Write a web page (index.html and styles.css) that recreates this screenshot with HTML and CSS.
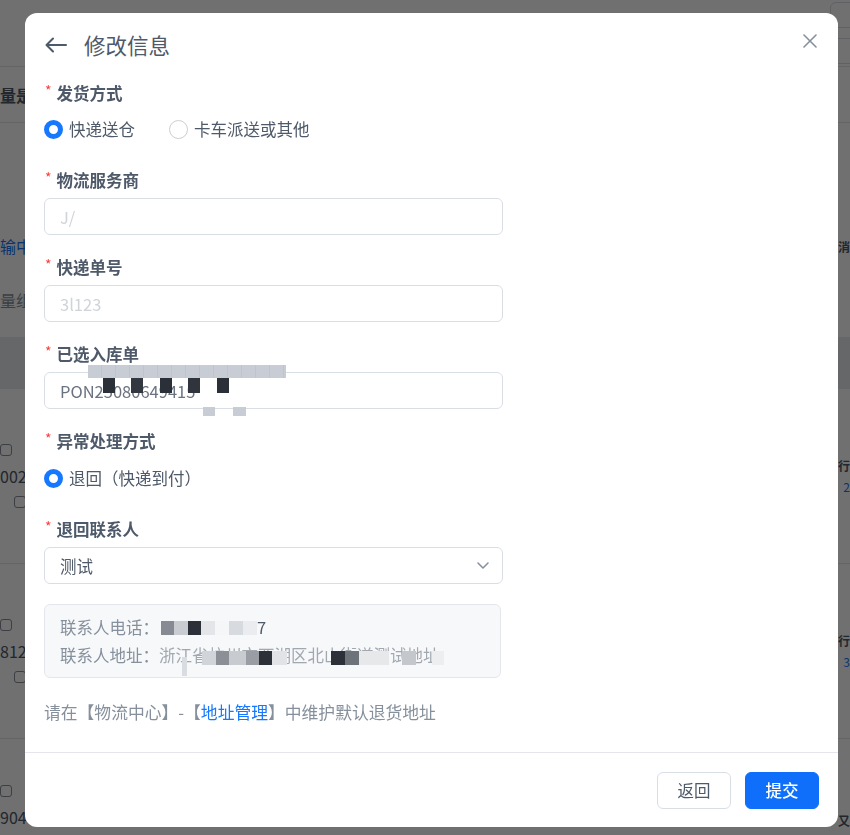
FILE: index.html
```html
<!DOCTYPE html>
<html lang="zh-CN">
<head>
<meta charset="utf-8">
<title>修改信息</title>
<link rel="stylesheet" href="styles.css">
</head>
<body>
<div class="page">
  <div class="bg-row row-top">
    <span></span>
    <div class="bg-btns"><span class="bg-btn"></span><span class="bg-btn"></span></div>
  </div>
  <div class="bg-row row-filter"><span class="bg-text">量是</span><span></span></div>
  <div class="bg-row row-gap"><span></span><span></span></div>
  <div class="bg-row row-tabs"><span class="bg-link">输中</span><span class="bg-text edge">消</span></div>
  <div class="bg-row row-batch"><span class="bg-text light">量组</span><span></span></div>
  <div class="bg-head"></div>
  <div class="bg-item">
    <div class="bg-left"><span class="bg-copy"></span><span class="bg-num">002</span><span class="bg-copy shift"></span></div>
    <div class="bg-right"><span class="bg-text">行</span><span class="bg-link">2</span></div>
  </div>
  <div class="bg-item">
    <div class="bg-left"><span class="bg-copy"></span><span class="bg-num">812</span><span class="bg-copy shift"></span></div>
    <div class="bg-right"><span class="bg-text">行</span><span class="bg-link">3</span></div>
  </div>
  <div class="bg-item last">
    <div class="bg-left"><span class="bg-copy"></span><span class="bg-num">904</span></div>
    <div class="bg-right"><span class="bg-text">又</span></div>
  </div>
</div>

<div class="mask">
  <div class="modal">
    <div class="modal-header">
      <svg class="back" viewBox="0 0 22 16" fill="none" stroke="#4e5969" stroke-width="2" stroke-linecap="round" stroke-linejoin="round"><path d="M21 8H2"/><path d="M8 1.5L1.5 8L8 14.5"/></svg>
      <span class="title">修改信息</span>
      <svg class="close" viewBox="0 0 14 14" fill="none" stroke="#86909c" stroke-width="1.6" stroke-linecap="round"><path d="M1 1L13 13"/><path d="M13 1L1 13"/></svg>
    </div>

    <div class="modal-body">
      <div class="item item-radio">
        <div class="label"><span class="req">*</span><span>发货方式</span></div>
        <div class="radios">
          <span class="radio checked"><span class="dot"></span>快递送仓</span>
          <span class="radio"><span class="dot"></span>卡车派送或其他</span>
        </div>
      </div>

      <div class="item">
        <div class="label"><span class="req">*</span><span>物流服务商</span></div>
        <div class="input"><span class="ghost">J/</span></div>
      </div>

      <div class="item">
        <div class="label"><span class="req">*</span><span>快递单号</span></div>
        <div class="input"><span class="ghost">3l123</span></div>
      </div>

      <div class="item">
        <div class="label"><span class="req">*</span><span>已选入库单</span></div>
        <div class="input input-pon">
          <span class="pon">PON25080649415</span>
          <span class="mosaic pon-band"></span>
          <span class="mosaic pon-dark"></span>
          <span class="mosaic pon-low"></span>
        </div>
      </div>

      <div class="item item-radio item-radio2">
        <div class="label"><span class="req">*</span><span>异常处理方式</span></div>
        <div class="radios">
          <span class="radio checked"><span class="dot"></span>退回（快递到付）</span>
        </div>
      </div>

      <div class="item item-last">
        <div class="label"><span class="req">*</span><span>退回联系人</span></div>
        <div class="input select">
          <span class="value">测试</span>
          <svg class="chev" viewBox="0 0 12 7" fill="none" stroke="#86909c" stroke-width="1.5" stroke-linecap="round" stroke-linejoin="round"><path d="M1 1L6 6L11 1"/></svg>
        </div>
      </div>

      <div class="info">
        <div class="info-line"><span>联系人电话：</span><span class="masked phone"><span class="mosaic phone-m"></span>7</span></div>
        <div class="info-line"><span>联系人地址：</span><span class="masked addr">浙江省杭州市西湖区北山街道测试地址<span class="mosaic addr-m"></span><span class="mosaic addr-tail"></span></span></div>
      </div>

      <div class="hint">请在【物流中心】-【<span class="link">地址管理</span>】中维护默认退货地址</div>
    </div>

    <div class="modal-footer">
      <button class="btn btn-default">返回</button>
      <button class="btn btn-primary">提交</button>
    </div>
  </div>
</div>
</body>
</html>
```

FILE: styles.css
```css
* {
  box-sizing: border-box;
}

html,
body {
  margin: 0;
  padding: 0;
}

body {
  width: 850px;
  height: 835px;
  overflow: hidden;
  position: relative;
  background: #ffffff;
  font-family: "Noto Sans CJK SC", "Noto Sans", sans-serif;
}

/* ---------- background page ---------- */
.page {
  width: 850px;
  height: 835px;
  overflow: hidden;
  font-size: 16px;
  color: #4e5969;
}

.bg-row {
  display: flex;
  justify-content: space-between;
  align-items: center;
  border-bottom: 1px solid #e5e6eb;
}

.row-top {
  height: 67px;
}

.bg-btns {
  display: flex;
  flex-direction: column;
  gap: 10px;
  margin-right: -20px;
}

.bg-btn {
  width: 40px;
  height: 26px;
  border: 1px solid #d9dde4;
  border-radius: 6px;
}

.row-filter {
  height: 56px;
}

.row-gap {
  height: 92px;
  border-bottom: none;
}

.row-tabs {
  height: 62px;
  border-bottom: none;
}

.row-batch {
  height: 46px;
  border-bottom: none;
}

.bg-text {
  color: #4e5969;
  font-weight: 700;
}

.bg-text.light {
  color: #86909c;
  font-weight: 400;
}

.bg-text.edge {
  font-size: 12px;
}

.bg-link {
  color: #1677ff;
}

.bg-head {
  height: 52px;
  margin-top: 14px;
  background: #e9ebef;
}

.bg-item {
  height: 175px;
  display: flex;
  justify-content: space-between;
  align-items: center;
  border-bottom: 1px solid #e5e6eb;
}

.bg-item.last {
  height: 90px;
  align-items: flex-end;
  border-bottom: none;
}

.bg-left {
  display: flex;
  flex-direction: column;
  gap: 8px;
}

.bg-num {
  font-size: 16px;
  color: #4e5969;
}

.bg-copy {
  width: 12px;
  height: 12px;
  border: 1.5px solid #86909c;
  border-radius: 3px;
}

.bg-copy.shift {
  margin-left: 14px;
}

.bg-right {
  display: flex;
  flex-direction: column;
  align-items: flex-end;
  gap: 4px;
  font-size: 12px;
}

/* ---------- overlay + modal ---------- */
.mask {
  position: fixed;
  inset: 0;
  background: rgba(0, 0, 0, 0.56);
  padding: 13px 12px 8px 25px;
}

.modal {
  width: 813px;
  height: 814px;
  background: #ffffff;
  border-radius: 12px;
  display: flex;
  flex-direction: column;
  overflow: hidden;
}

.modal-header {
  display: flex;
  align-items: center;
  height: 28px;
  margin-top: 18px;
  padding: 0 21px 0 20px;
}

.back {
  width: 22px;
  height: 16px;
  flex: none;
}

.title {
  margin-left: 17px;
  font-size: 21.5px;
  line-height: 28px;
  color: #4e5969;
}

.close {
  margin-left: auto;
  width: 14px;
  height: 14px;
  align-self: flex-start;
  margin-top: 3px;
}

.modal-body {
  flex: 1;
  padding: 23px 19px 0;
}

.item {
  margin-bottom: 21px;
}

.item-radio {
  margin-bottom: 29px;
}

.item-last {
  margin-bottom: 0;
}

.label {
  display: flex;
  align-items: center;
  gap: 5px;
  font-size: 16.5px;
  font-weight: 700;
  line-height: 22px;
  color: #4e5969;
}

.req {
  margin-left: 1px;
  color: #f53f3f;
  font-size: 14px;
  line-height: 14px;
  font-weight: 400;
  position: relative;
  top: -3px;
}

.radios {
  display: flex;
  align-items: center;
  gap: 34px;
  height: 22px;
  margin-top: 14px;
}

.item-radio2 .radios {
  margin-top: 15px;
}

.radio {
  display: flex;
  align-items: center;
  gap: 6px;
  font-size: 16.5px;
  color: #4e5969;
}

.dot {
  width: 19px;
  height: 19px;
  border-radius: 50%;
  border: 1px solid #c9cdd4;
  background: #ffffff;
  flex: none;
}

.radio.checked .dot {
  border: 5px solid #1677ff;
}

.input {
  position: relative;
  display: flex;
  align-items: center;
  width: 459px;
  height: 37px;
  margin-top: 7px;
  padding: 0 15px;
  border: 1px solid #d9dde4;
  border-radius: 6px;
  font-size: 16.5px;
  color: #4e5969;
}

.ghost {
  color: #d0d3d8;
  filter: blur(0.7px);
}

.pon {
  color: #6b7280;
  filter: blur(0.3px);
}

.mosaic {
  position: absolute;
  display: block;
}

.pon-band {
  left: 43px;
  top: -8px;
  width: 198px;
  height: 13px;
  background: repeating-linear-gradient(90deg, #c8cdd5 0 13px, #bfc5ce 13px 14px);
}

.pon-dark {
  left: 43px;
  top: 5px;
  width: 198px;
  height: 15px;
  background: linear-gradient(90deg,
    transparent 0 15px,
    #2b2f37 15px 27px,
    transparent 27px 43px,
    #33373f 43px 55px,
    transparent 55px 72px,
    #2b2f37 72px 84px,
    transparent 84px 100px,
    #30343c 100px 112px,
    #ffffff 112px 129px,
    #2b2f37 129px 141px,
    #ffffff 141px 160px,
    transparent 160px);
}

.pon-low {
  left: 158px;
  top: 34px;
  width: 44px;
  height: 9px;
  background: linear-gradient(90deg,
    #c8cdd5 0 12px,
    transparent 12px 30px,
    #c8cdd5 30px 43px,
    transparent 43px);
}

.select {
  justify-content: space-between;
  padding-right: 13px;
}

.value {
  color: #4e5969;
}

.chev {
  width: 12px;
  height: 7px;
}

.info {
  width: 457px;
  margin-top: 20px;
  padding: 8px 15px 8px 15px;
  background: #f7f8fa;
  border: 1px solid #e5e6eb;
  border-radius: 6px;
  font-size: 16.5px;
  line-height: 28px;
  color: #86909c;
}

.info-line {
  display: flex;
}

.masked {
  position: relative;
  color: #7b828c;
}

.phone {
  padding-left: 98px;
  color: #4e5969;
}

.phone-m {
  left: 2px;
  top: 8px;
  width: 96px;
  height: 14px;
  background: linear-gradient(90deg,
    #868b93 0 13px,
    #c9ccd1 13px 27px,
    #2c3038 27px 40px,
    #e3e5e8 40px 54px,
    #f5f6f7 54px 68px,
    #d7dade 68px 82px,
    #eaecef 82px 96px);
}

.addr {
  color: #a2a8b0;
}

.addr-m {
  left: 43px;
  top: 10px;
  width: 242px;
  height: 14px;
  background: linear-gradient(90deg,
    #d1d4d8 0 14px,
    #8c9096 14px 27px,
    #c8cbd0 27px 44px,
    #9a9ea4 44px 57px,
    #2c3038 57px 70px,
    #e1e3e6 70px 85px,
    transparent 85px 129px,
    #2c3038 129px 143px,
    #6e737a 143px 157px,
    #e6e8ea 157px 187px,
    transparent 187px 200px,
    #c4c7cc 200px 214px,
    transparent 214px 230px,
    #eceef0 230px 242px);
}

.addr-tail {
  left: 23px;
  top: 16px;
  width: 5px;
  height: 19px;
  background: #d9dce0;
}

.hint {
  margin-top: 23px;
  font-size: 16.8px;
  line-height: 22px;
  color: #86909c;
}

.link {
  color: #1677ff;
}

.modal-footer {
  height: 75px;
  flex: none;
  display: flex;
  align-items: center;
  justify-content: flex-end;
  gap: 14px;
  padding-right: 19px;
  border-top: 1px solid #e5e6eb;
}

.btn {
  width: 74px;
  height: 37px;
  border-radius: 6px;
  font-family: "Noto Sans CJK SC", "Noto Sans", sans-serif;
  font-size: 16.5px;
  cursor: pointer;
}

.btn-default {
  background: #ffffff;
  border: 1px solid #d9dde4;
  color: #4e5969;
}

.btn-primary {
  background: #0f6ffb;
  border: 1px solid #0f6ffb;
  color: #ffffff;
  font-weight: 500;
}
```
